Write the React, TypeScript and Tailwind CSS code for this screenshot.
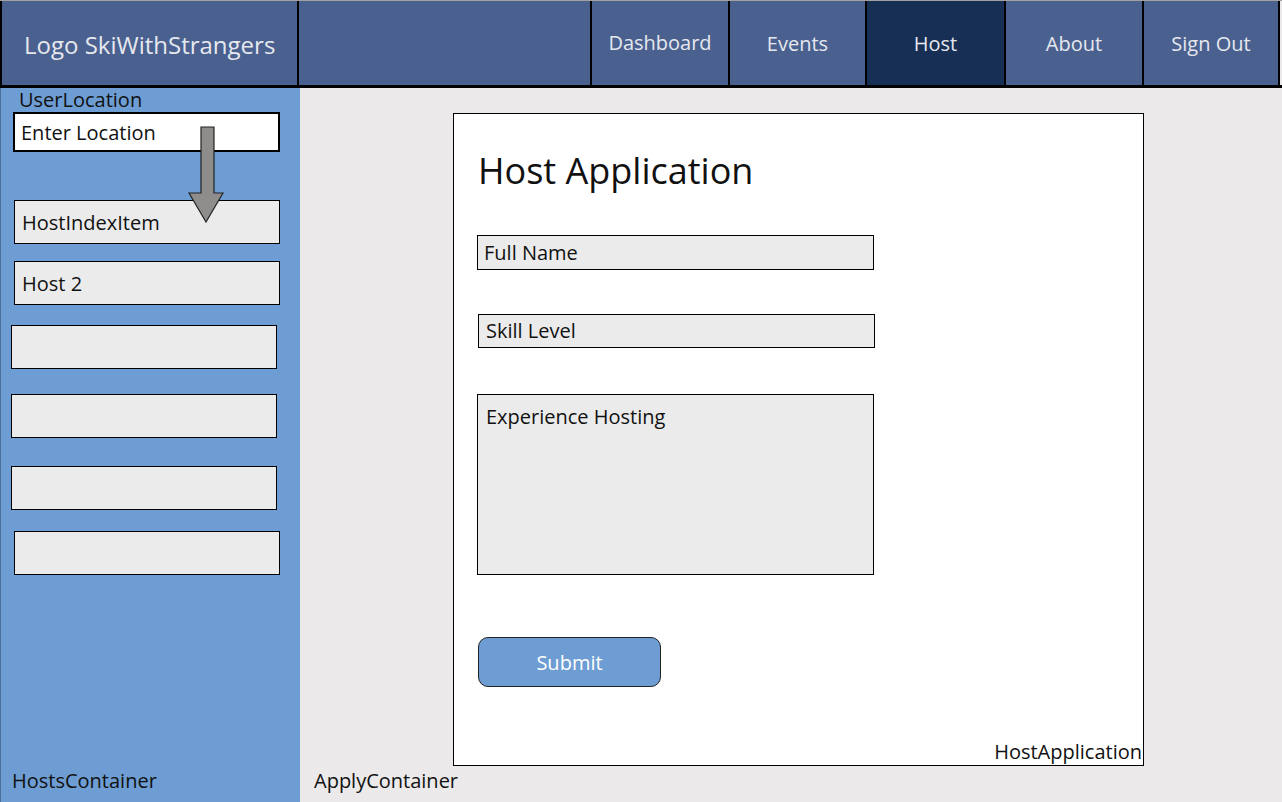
const font = { fontFamily: '"Open Sans", "Noto Sans", sans-serif' };

const NavCell = ({ label, w, active, pt }: { label: string; w: string; active?: boolean; pt?: string }) => (
  <div className={`${w} ${pt ?? "pt-[2px]"} h-full flex items-center justify-center border-r-2 border-black text-[20px] text-[#e6e8ee] ${active ? "bg-[#172e55]" : ""}`}>
    {label}
  </div>
);

const HostItem = ({ label, ml, mt }: { label?: string; ml: string; mt: string }) => (
  <div className={`${ml} ${mt} w-[266px] h-[44px] bg-[#ebebeb] border border-black flex items-center pl-[7px] pt-[2px] text-[20px] text-[#111]`}>
    {label}
  </div>
);

const Field = ({ label, ml, mt, h }: { label: string; ml: string; mt: string; h: string }) => (
  <div className={`${ml} ${mt} ${h} w-[397px] bg-[#ebebeb] border border-black pl-[6px] text-[20px] text-[#111]`}>
    {label}
  </div>
);

export default function App() {
  return (
    <div style={font} className="w-[1282px] h-[802px] overflow-hidden flex flex-col bg-[#ebe9ea]">
      <header className="h-[88px] flex shrink-0 bg-[#4a6190] border-t border-[#a0a0a0] border-b-[3px] border-b-black">
        <div className="w-[299px] h-full flex items-center pl-[22px] border-l-2 border-r-2 border-black text-[24px] text-[#e6e8ee] pt-[4px]">
          Logo SkiWithStrangers
        </div>
        <div className="w-[293px] h-full border-r-2 border-black" />
        <NavCell label="Dashboard" w="w-[138px]" pt="pt-0" />
        <NavCell label="Events" w="w-[137px]" />
        <NavCell label="Host" w="w-[139px]" active />
        <NavCell label="About" w="w-[138px]" />
        <NavCell label="Sign Out" w="w-[136px]" />
        <div className="flex-1 bg-[#ebe9ea]" />
      </header>
      <div className="flex flex-1">
        <aside className="w-[300px] bg-[#6d9dd3] border-l border-[#4d6f99] flex flex-col relative">
          <div className="ml-[18px] mt-[1px] text-[20px] leading-[22px] text-[#111]">UserLocation</div>
          <div className="ml-[12px] mt-[1px] w-[267px] h-[40px] bg-white border-2 border-black flex items-center pl-[6px] pt-[2px] text-[20px] text-[#111]">
            Enter Location
          </div>
          <HostItem label="HostIndexItem" ml="ml-[13px]" mt="mt-[48px]" />
          <HostItem label="Host 2" ml="ml-[13px]" mt="mt-[17px]" />
          <HostItem ml="ml-[10px]" mt="mt-[20px]" />
          <HostItem ml="ml-[10px]" mt="mt-[25px]" />
          <HostItem ml="ml-[10px]" mt="mt-[28px]" />
          <HostItem ml="ml-[13px]" mt="mt-[21px]" />
          <div className="mt-auto ml-[11px] mb-[9px] text-[20px] text-[#111]">HostsContainer</div>
          <svg className="absolute left-[187px] top-[38px]" width="36" height="97" viewBox="0 0 36 97">
            <path d="M13 1 H26 V67 H35 L18 96 L1 67 H13 Z" fill="#8f8c8c" stroke="#222" strokeWidth="1.2" />
          </svg>
        </aside>
        <main className="flex-1 flex flex-col">
          <section className="ml-[153px] mt-[25px] w-[691px] h-[653px] bg-white border border-black flex flex-col">
            <h1 className="ml-[24px] mt-[34px] text-[36px] leading-[46px] text-[#111]">Host Application</h1>
            <Field label="Full Name" ml="ml-[23px]" mt="mt-[41px]" h="h-[35px] flex items-center" />
            <Field label="Skill Level" ml="ml-[24px]" mt="mt-[44px]" h="h-[34px] flex items-center pl-[7px]" />
            <Field label="Experience Hosting" ml="ml-[23px]" mt="mt-[46px]" h="h-[181px] pt-[7px] pl-[8px]" />
            <button className="ml-[24px] mt-[62px] w-[183px] h-[50px] pt-[2px] rounded-[10px] bg-[#6d9dd3] border border-[#222] text-white text-[20px]">
              Submit
            </button>
            <div className="mt-auto self-end mr-[1px] mb-[-2px] text-[20px] text-[#111]">HostApplication</div>
          </section>
          <div className="ml-[14px] mt-auto mb-[9px] text-[20px] text-[#111]">ApplyContainer</div>
        </main>
      </div>
    </div>
  );
}
